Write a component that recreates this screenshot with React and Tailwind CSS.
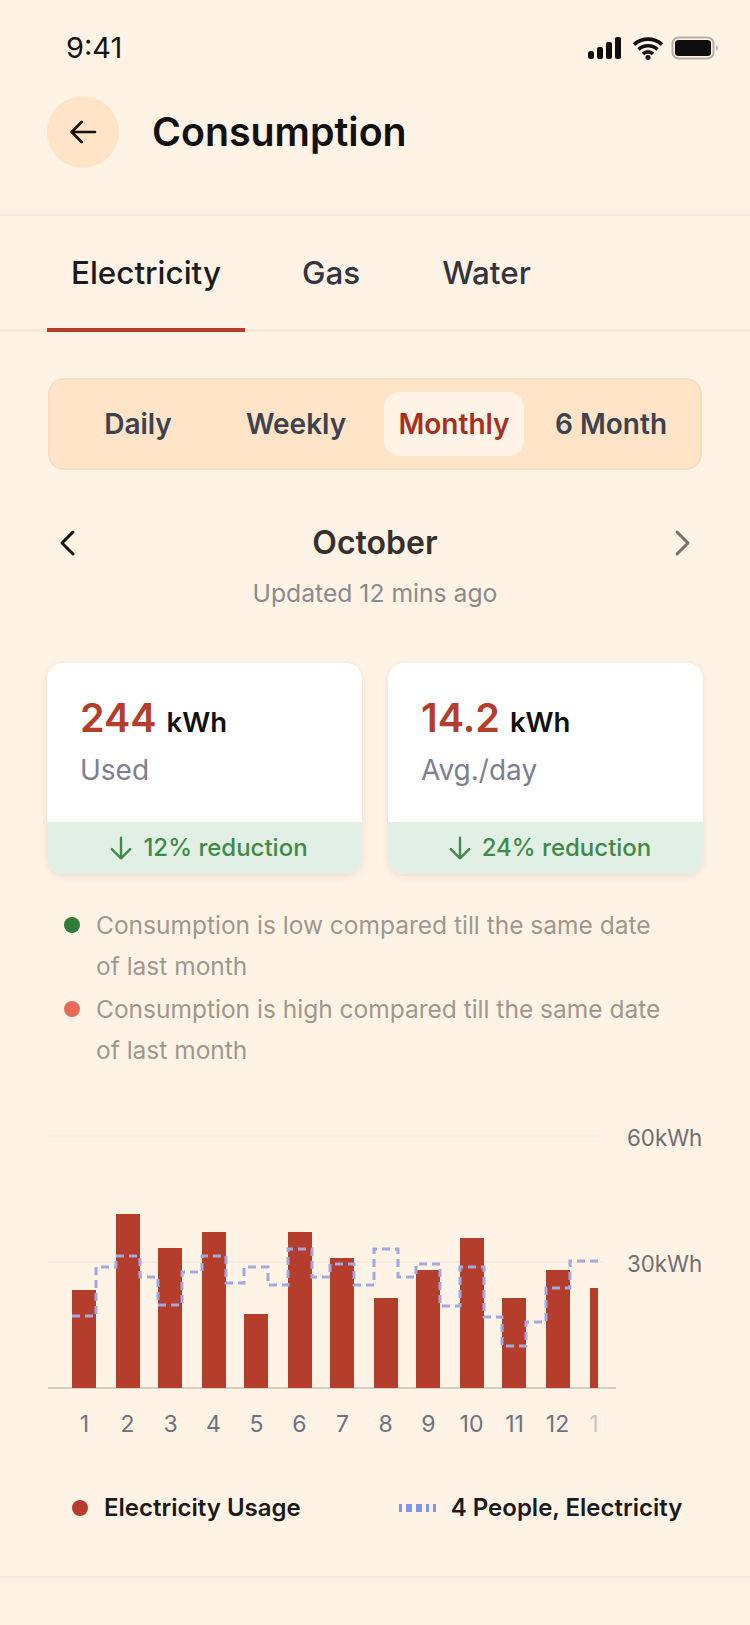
import React from "react";

const bars = [
  [72, 24, 1290], [116, 24, 1214], [158, 24, 1248], [202, 24, 1232], [244, 24, 1314], [288, 24, 1232], [330, 24, 1258],
  [374, 24, 1298], [416, 24, 1270], [460, 24, 1238], [502, 24, 1298], [546, 24, 1270], [590, 8, 1288],
];
const steps = [
  [72, 1316], [96, 1316], [96, 1267], [116, 1267], [116, 1256], [140, 1256], [140, 1277], [158, 1277], [158, 1305], [182, 1305],
  [182, 1272], [202, 1272], [202, 1256], [226, 1256], [226, 1283], [244, 1283], [244, 1267], [268, 1267], [268, 1285], [288, 1285],
  [288, 1249], [312, 1249], [312, 1277], [330, 1277], [330, 1264], [354, 1264], [354, 1285], [374, 1285], [374, 1249], [398, 1249],
  [398, 1277], [416, 1277], [416, 1264], [440, 1264], [440, 1306], [460, 1306], [460, 1267], [484, 1267], [484, 1317], [502, 1317],
  [502, 1346], [526, 1346], [526, 1322], [546, 1322], [546, 1288], [570, 1288], [570, 1261], [598, 1261],
];
const OX = 47, OY = 1120;

function Card({ value, label, change }) {
  return (
    <div className="flex-1 h-[211px] rounded-2xl bg-white overflow-hidden flex flex-col shadow-[0_2px_6px_rgba(120,80,40,0.14)]">
      <div className="flex-1 pl-[33px] pt-[30px]">
        <div className="flex items-baseline h-[50px]">
          <span className="text-[39.5px] leading-[50px] font-semibold text-[#B53D2B]">{value}</span>
          <span className="ml-[10px] text-[27.5px] font-semibold text-[#111]">kWh</span>
        </div>
        <div className="mt-[2px] text-[28px] leading-[50px] text-[#7C8091]">{label}</div>
      </div>
      <div className="h-[52px] pl-[7px] bg-[#E2EFE4] flex items-center justify-center gap-[9px] text-[#3F8A48] text-[24px] font-medium">
        <svg width="26" height="26" viewBox="0 0 24 24" fill="none" stroke="#3F8A48" strokeWidth="2.2" strokeLinecap="round" strokeLinejoin="round">
          <path d="M12 2.5v19M3.5 13l8.5 8.5 8.500-8.500" />
        </svg>
        <span>{change}</span>
      </div>
    </div>
  );
}

function Note({ color, children }) {
  return (
    <div className="flex">
      <span className={`mt-[12px] w-4 h-4 rounded-full shrink-0 ${color}`} />
      <p className="ml-[16px] w-[575px] text-[24.5px] leading-[40.5px] text-[#A0978E]">{children}</p>
    </div>
  );
}

export default function App() {
  return (
    <div className="w-[750px] h-[1625px] overflow-hidden bg-[#FFF3E6] font-['Inter',sans-serif] text-[#111]">
      {/* status bar */}
      <div className="h-[96px] pl-[66px] pr-[32px] pt-[28px] flex justify-between items-start">
        <span className="text-[29px] leading-[39px] text-[#141414]">9:41</span>
        <svg className="mt-[8px]" width="132" height="24" viewBox="0 0 132 24" fill="none">
          <rect x="2" y="15" width="6" height="8" rx="2.5" fill="#0d0d0d" />
          <rect x="11" y="11" width="6" height="12" rx="2" fill="#0d0d0d" />
          <rect x="20" y="6" width="6" height="17" rx="2" fill="#0d0d0d" />
          <rect x="29" y="1" width="6" height="22" rx="2" fill="#0d0d0d" />
          <path d="M48 8.500a21 21 0 0 1 28 0M52.500 13.500a14 14 0 0 1 19 0M57 18a7 7 0 0 1 10 0" stroke="#0d0d0d" strokeWidth="3.6" />
          <circle cx="62" cy="21.500" r="2.600" fill="#0d0d0d" />
          <rect x="86.500" y="1.500" width="41" height="21" rx="6" stroke="#b9afa5" strokeWidth="2" />
          <rect x="89" y="4" width="36" height="16" rx="3.500" fill="#0d0d0d" />
          <path d="M130 9v6c1.200-.5 2-1.600 2-3s-.8-2.500-2-3z" fill="#b9afa5" />
        </svg>
      </div>

      {/* header */}
      <div className="h-[120px] border-b-2 border-[#F6E7DA] pl-[47px] flex items-start">
        <div className="w-[72px] h-[72px] rounded-full bg-[#FFE4C7] flex items-center justify-center">
          <svg width="32" height="32" viewBox="0 0 24 24" fill="none" stroke="#141414" strokeWidth="2" strokeLinecap="round" strokeLinejoin="round">
            <path d="M21 12H3.500M11 4.500 3.500 12l7.500 7.500" />
          </svg>
        </div>
        <h1 className="ml-[33px] text-[39.3px] leading-[72px] font-semibold text-[#111]">Consumption</h1>
      </div>

      {/* tabs */}
      <div className="h-[116px] border-b-[3px] border-[#FAE7D6] flex pl-[47px] text-[31.4px] font-medium">
        <div className="relative w-[198px] pl-[24px] pt-[34px] leading-[46px] text-[#1B1B1F]">
          Electricity
          <span className="absolute left-0 right-0 -bottom-[3px] h-1 bg-[#B53D2B]" />
        </div>
        <div className="ml-[57px] pt-[34px] leading-[46px] text-[#34343E]">Gas</div>
        <div className="ml-[82px] pt-[34px] leading-[46px] text-[#34343E]">Water</div>
      </div>

      {/* segmented control */}
      <div className="mx-[48px] mt-[46px] h-[92px] w-[654px] rounded-2xl bg-[#FFE4C7] border-2 border-[#FADDC0] flex items-center pl-[12px] text-[28px] font-semibold text-[#3C4250]">
        <div className="w-[152px] text-center">Daily</div>
        <div className="w-[164px] text-center">Weekly</div>
        <div className="ml-[6px] w-[140px] h-[64px] rounded-2xl bg-[#FFF3E6] flex items-center justify-center text-[#A62F20]">Monthly</div>
        <div className="w-[174px] text-center">6 Month</div>
      </div>

      {/* month */}
      <div className="mt-[53px] px-[58px] h-[40px] flex items-center justify-between">
        <svg width="20" height="32" viewBox="0 0 20 32" fill="none" stroke="#111" strokeWidth="3" strokeLinecap="round" strokeLinejoin="round">
          <path d="M15 5 4 16l11 11" />
        </svg>
        <span className="text-[32px] font-semibold text-[#34302D]">October</span>
        <svg width="20" height="32" viewBox="0 0 20 32" fill="none" stroke="#77726E" strokeWidth="3" strokeLinecap="round" strokeLinejoin="round">
          <path d="M5 5l11 11L5 27" />
        </svg>
      </div>
      <div className="mt-[10px] h-[40px] leading-[40px] text-center text-[24.7px] text-[#8B8A8D]">Updated 12 mins ago</div>

      {/* cards */}
      <div className="mt-[50px] mx-[47px] flex gap-[26px]">
        <Card value="244" label="Used" change="12% reduction" />
        <Card value="14.2" label="Avg./day" change="24% reduction" />
      </div>

      {/* notes */}
      <div className="mt-[31px] pl-[64px] flex flex-col gap-[3px]">
        <Note color="bg-[#2F7D37]">Consumption is low compared till the same date of last month</Note>
        <Note color="bg-[#E8685A]">Consumption is high compared till the same date of last month</Note>
      </div>

      {/* chart */}
      <div className="mt-[50px] flex pl-[47px]">
        <svg width="570" height="272" viewBox="0 0 570 272" className="shrink-0">
          <line x1="1" x2="557" y1={1136 - OY} y2={1136 - OY} stroke="#FBEEE2" strokeWidth="2" />
          <line x1="1" x2="557" y1={1262 - OY} y2={1262 - OY} stroke="#F9EBDD" strokeWidth="2" />
          <line x1="1" x2="569" y1={1388 - OY} y2={1388 - OY} stroke="#D6CDC3" strokeWidth="2" />
          {bars.map(([x, w, top]) => (
            <rect key={x} x={x - OX} y={top - OY} width={w} height={1388 - top} fill="#B53D2B" />
          ))}
          <polyline
            points={steps.map(([x, y]) => `${x - OX},${y - OY}`).join(" ")}
            fill="none"
            stroke="#A1A9E4"
            strokeWidth="3"
            strokeDasharray="8 5"
          />
        </svg>
        <div className="ml-[10px] mt-[2px] text-[22.3px] leading-[32px] text-[#6F6E72] flex flex-col gap-[94px]">
          <span>60kWh</span>
          <span>30kWh</span>
        </div>
      </div>

      {/* x axis */}
      <div className="ml-[63px] mt-[17px] w-[546px] flex text-[23px] leading-[30px] text-[#6E7280]">
        {["1", "2", "3", "4", "5", "6", "7", "8", "9", "10", "11", "12"].map((n) => (
          <span key={n} className="w-[43px] shrink-0 text-center">{n}</span>
        ))}
        <span className="w-[30px] shrink-0 text-center text-[#C9C5C1]">1</span>
      </div>

      {/* legend */}
      <div className="mt-[49px] h-[40px] flex items-center text-[24px] font-semibold text-[#1B1B1B]">
        <span className="ml-[72px] w-4 h-4 rounded-full bg-[#B53D2B]" />
        <span className="ml-[16px]">Electricity Usage</span>
        <svg className="ml-[98px]" width="38" height="10" viewBox="0 0 38 10">
          <line x1="0" x2="38" y1="5" y2="5" stroke="#7F95E6" strokeWidth="8" strokeDasharray="3 4 6 4 6 4 3 4" />
        </svg>
        <span className="ml-[14px]">4 People, Electricity</span>
      </div>

      <div className="mt-[48px] border-t-2 border-[#F6E7DA]" />
    </div>
  );
}
